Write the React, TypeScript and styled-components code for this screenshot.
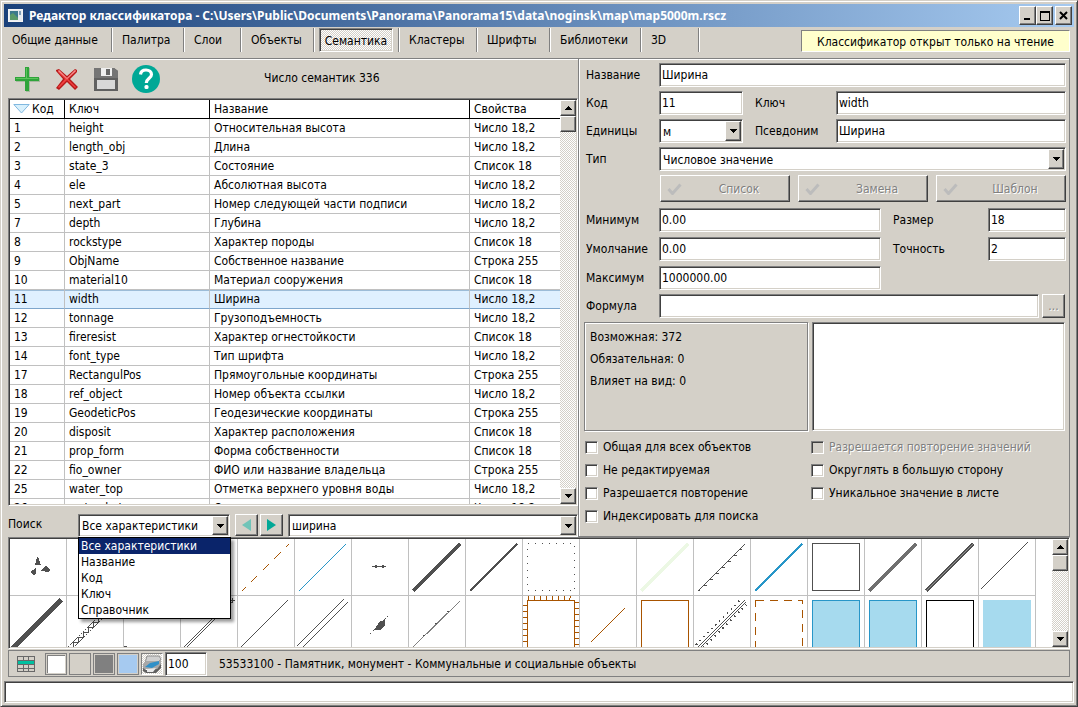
import React from "react";
import styled, { createGlobalStyle, css } from "styled-components";

const face = "#d4d0c8";
const shadow = "#808080";
const dark = "#404040";
const accent = "#00a896";
const sans = '"DejaVu Sans Condensed", "Noto Sans", sans-serif';

const sunken = css`
  border: 1px solid;
  border-color: ${shadow} #fff #fff ${shadow};
  box-shadow: inset 1px 1px ${dark}, inset -1px -1px ${face};
`;
const raised = css`
  border: 1px solid;
  border-color: #fff ${dark} ${dark} #fff;
  box-shadow: inset -1px -1px ${shadow};
  background: ${face};
`;
const dither = css`
  background: repeating-conic-gradient(#fff 0 25%, ${face} 0 50%) 0 0 / 2px 2px;
`;

const Global = createGlobalStyle`
  * { box-sizing: border-box; }
  body { margin: 0; background: ${face}; }
  body, button, input, select, table { font: 12px/16px ${sans}; color: #000; }
  button, input, select { margin: 0; padding: 0; border: 0; border-radius: 0; outline: 0; }
  svg { display: block; flex: none; }
`;

const Window = styled.div`
  display: flex;
  flex-direction: column;
  height: 100vh;
  min-height: 660px;
  min-width: 900px;
  padding: 3px;
  background: ${face};
  border: 1px solid;
  border-color: ${face} ${dark} ${dark} ${face};
  box-shadow: inset 1px 1px #fff, inset -1px -1px ${shadow};
`;
const TitleBar = styled.header`
  display: flex;
  align-items: center;
  flex: none;
  height: 23px;
  padding: 0 2px 0 4px;
  gap: 6px;
  background: linear-gradient(90deg, #1a417a, #a6caf0);
  color: #fff;
`;
const Title = styled.h1`
  flex: 1;
  margin: 0;
  font: bold 12px/16px "Noto Sans", sans-serif;
  white-space: nowrap;
`;
const CaptionButtons = styled.div`
  display: flex;
`;
const CaptionButton = styled.button`
  ${raised}
  display: grid;
  place-items: center;
  width: 17px;
  height: 19px;
  &:last-child { margin-left: 2px; }
`;

const TabBar = styled.nav`
  display: flex;
  flex: none;
  height: 31px;
  padding: 1px 4px 6px 0;
`;
const Tab = styled.button<{ $width: number }>`
  width: ${(p) => p.$width}px;
  height: 24px;
  padding-left: 10px;
  background: none;
  border-right: 1px solid ${shadow};
  box-shadow: 1px 0 #fff;
  text-align: left;
  white-space: nowrap;
  &:first-child { padding-left: 8px; }
`;
const ActiveSlot = styled.div`
  padding: 0 5px;
  border-right: 1px solid ${shadow};
  box-shadow: 1px 0 #fff;
`;
const ActiveTab = styled.button`
  ${sunken}
  ${dither}
  width: 74px;
  height: 24px;
  padding-top: 2px;
  text-align: center;
  white-space: nowrap;
`;
const Notice = styled.p`
  margin: 2px 0 0 auto;
  width: 269px;
  height: 22px;
  border: 1px solid;
  border-color: ${shadow} #fff #fff ${shadow};
  background: #ffffcc;
  line-height: 22px;
  text-align: center;
  white-space: nowrap;
`;

const Main = styled.main`
  display: grid;
  grid-template-columns: 570fr 492fr;
  flex: 1;
  min-height: 0;
  margin: 0 4px;
`;
const LeftPane = styled.section`
  display: flex;
  flex-direction: column;
  min-height: 0;
  min-width: 0;
  border-top: 1px solid ${shadow};
  box-shadow: inset 0 1px #fff;
`;
const Toolbar = styled.div`
  display: flex;
  align-items: center;
  flex: none;
  height: 39px;
  padding: 1px 0 0 7px;
`;
const ToolButton = styled.button`
  display: grid;
  place-items: center;
  width: 39px;
  height: 28px;
  padding-right: 14px;
  background: none;
`;
const Count = styled.output`
  margin: -2px 0 0 93px;
`;

const ListFrame = styled.div`
  ${sunken}
  display: flex;
  flex: 1;
  min-height: 0;
  padding: 1px;
  background: #fff;
`;
const ListView = styled.div`
  flex: 1;
  overflow: hidden;
`;
const Table = styled.table`
  width: 100%;
  table-layout: fixed;
  border-spacing: 0;
  th, td {
    height: 19px;
    padding: 0 0 0 4px;
    border-bottom: 1px solid #c0c0c0;
    border-right: 1px solid #c0c0c0;
    text-align: left;
    font-weight: normal;
    white-space: nowrap;
    overflow: hidden;
  }
  th { border-color: #000; }
  th:last-child, td:last-child { border-right: 0; }
`;
const Row = styled.tr<{ $selected: boolean }>`
  ${(p) => p.$selected && css`
    td {
      background: #dff0ff;
      border-bottom-color: #7ea6cc;
      box-shadow: inset 0 1px #9cbcd8;
    }
  `}
`;
const HeadCell = styled.th<{ $width?: number }>`
  width: ${(p) => (p.$width ? `${p.$width}px` : "auto")};
`;
const SortLabel = styled.span`
  display: flex;
  align-items: center;
  gap: 2px;
  margin-left: -1px;
`;

const ScrollTrack = styled.div`
  ${dither}
  display: flex;
  flex-direction: column;
  flex: none;
  width: 16px;
`;
const ScrollButton = styled.button`
  ${raised}
  display: grid;
  place-items: center;
  width: 16px;
  height: 16px;
  flex: none;
  &:last-child { margin-top: auto; }
`;
const Thumb = styled.div`
  ${raised}
  height: 16px;
`;

const SearchRow = styled.div`
  display: flex;
  flex: none;
  height: 31px;
  padding-top: 8px;
`;
const SearchLabel = styled.label`
  width: 70px;
  padding-top: 2px;
`;
const SelectHolder = styled.div`
  position: relative;
  width: 152px;
`;
const SearchButton = styled.button`
  ${raised}
  display: grid;
  place-items: center;
  width: 23px;
  height: 22px;
  margin-left: 5px;
  & + & { margin-left: 2px; }
`;
const GrowHolder = styled.div`
  flex: 1;
  margin-left: 5px;
`;
const Popup = styled.ul`
  position: absolute;
  z-index: 2;
  top: 23px;
  left: 0;
  width: 153px;
  margin: 0;
  padding: 0;
  border: 1px solid #000;
  background: #fff;
  box-shadow: 3px 3px 3px rgba(0, 0, 0, 0.4);
  list-style: none;
`;
const Option = styled.li<{ $selected: boolean }>`
  padding-left: 2px;
  line-height: 16px;
  white-space: nowrap;
  ${(p) => p.$selected && css`background: #0a246a; color: #fff;`}
`;

const ComboFrame = styled.div<{ $height: number }>`
  ${sunken}
  display: flex;
  height: ${(p) => p.$height}px;
  padding: 1px;
  background: #fff;
  min-width: 0;
  select, input {
    flex: 1;
    min-width: 0;
    padding: 1px 0 0 2px;
    appearance: none;
    background: transparent;
  }
`;
const DropButton = styled.button`
  ${raised}
  display: grid;
  place-items: center;
  width: 16px;
  flex: none;
`;
const TextBox = styled.input`
  ${sunken}
  height: 24px;
  padding: 0 2px;
  background: #fff;
  min-width: 0;
  width: 100%;
`;

const RightPane = styled.section`
  display: flex;
  flex-direction: column;
  gap: 4px;
  min-width: 0;
  padding: 4px 3px 0 7px;
  border: 1px solid ${shadow};
  box-shadow: inset 1px 1px #fff, 0 1px #fff;
`;
const FormRow = styled.div<{ $cols: string }>`
  display: grid;
  grid-template-columns: 73px ${(p) => p.$cols};
  align-items: center;
`;
const SideLabel = styled.label`
  padding-left: 12px;
`;
const PushRow = styled.div`
  display: grid;
  grid-template-columns: repeat(3, 1fr);
  gap: 8px;
  margin: 0 0 2px 74px;
`;
const PushButton = styled.button`
  ${raised}
  display: grid;
  grid-template-columns: 32px 1fr 10px;
  align-items: center;
  height: 27px;
  padding-left: 6px;
  color: ${shadow};
  text-shadow: 1px 1px #fff;
`;
const RangeRows = styled.div`
  display: grid;
  gap: 5px;
`;
const MoreButton = styled.button`
  ${raised}
  width: 23px;
  height: 24px;
  margin-left: 3px;
  color: ${shadow};
  text-shadow: 1px 1px #fff;
`;
const InfoRow = styled.div`
  display: grid;
  grid-template-columns: 224px 1fr;
  gap: 4px;
  height: 109px;
  margin: 0 1px 0 -2px;
`;
const InfoBox = styled.div`
  padding: 3px 5px;
  border: 1px solid ${shadow};
  box-shadow: inset 1px 1px #fff, 1px 1px #fff;
  line-height: 22px;
  p { margin: 0; }
`;
const NoteArea = styled.textarea`
  ${sunken}
  display: block;
  width: 100%;
  resize: none;
  background: #fff;
`;
const Checks = styled.div`
  display: grid;
  grid-template-columns: 226px 1fr;
  row-gap: 7px;
  padding-top: 4px;
`;
const CheckLabel = styled.label<{ $off?: boolean }>`
  display: flex;
  align-items: center;
  gap: 5px;
  margin-left: -1px;
  white-space: nowrap;
  ${(p) => p.$off && css`color: ${shadow}; text-shadow: 1px 1px #fff;`}
`;
const CheckBox = styled.input`
  ${sunken}
  appearance: none;
  width: 13px;
  height: 13px;
  background: #fff;
  &:disabled { background: ${face}; }
`;

const SymbolFrame = styled.section`
  ${sunken}
  display: flex;
  flex: none;
  height: 112px;
  margin: 0 4px;
  padding: 1px;
  background: #fff;
`;
const SymbolGrid = styled.div`
  display: grid;
  grid-template-columns: repeat(auto-fill, 57px);
  grid-auto-rows: 57px;
  flex: 1;
  overflow: hidden;
`;
const SymbolCell = styled.div`
  border-right: 1px solid #c0c0c0;
  border-bottom: 1px solid #c0c0c0;
`;

const StatusBar = styled.footer`
  display: flex;
  align-items: center;
  flex: none;
  gap: 2px;
  height: 27px;
  margin: 1px 4px 4px;
  padding: 0 8px;
  border: 1px solid ${shadow};
`;
const GridButton = styled.button`
  width: 26px;
  background: none;
`;
const Swatch = styled.button<{ $color: string; $active?: boolean }>`
  width: 22px;
  height: 22px;
  border: 1px solid ${shadow};
  background: ${(p) => p.$color};
  box-shadow: inset 0 0 0 1px ${face};
  ${(p) => p.$active && css`box-shadow: inset 0 0 0 1px ${face}, inset 2px 2px ${shadow};`}
`;
const PrintButton = styled.button`
  ${dither}
  display: grid;
  place-items: center;
  width: 22px;
  height: 22px;
  border: 1px solid;
  border-color: ${shadow} #fff #fff ${shadow};
`;
const ScaleBox = styled.div`
  width: 42px;
`;
const StatusText = styled.span`
  margin-left: 10px;
`;
const CommandLine = styled.input`
  ${sunken}
  flex: none;
  height: 22px;
  width: 100%;
  background: #fff;
`;

const Arrow = ({ up }: { up?: boolean }) => (
  <svg width="7" height="4" viewBox="0 0 7 4" shapeRendering="crispEdges" aria-hidden="true">
    <path d={up ? "M3.5 0L7 4H0z" : "M0 0h7L3.5 4z"} />
  </svg>
);

const Scrollbar = () => (
  <ScrollTrack>
    <ScrollButton aria-label="Вверх"><Arrow up /></ScrollButton>
    <Thumb />
    <ScrollButton aria-label="Вниз"><Arrow /></ScrollButton>
  </ScrollTrack>
);

const Combo = ({ id, value, height = 24, options }: { id: string; value: string; height?: number; options?: string[] }) => (
  <ComboFrame $height={height}>
    <select id={id} defaultValue={value}>
      {(options ?? [value]).map((o) => <option key={o}>{o}</option>)}
    </select>
    <DropButton tabIndex={-1} aria-hidden="true"><Arrow /></DropButton>
  </ComboFrame>
);

const AppIcon = () => (
  <svg width="15" height="13" viewBox="0 0 15 13" aria-hidden="true">
    <rect x=".5" y=".5" width="14" height="12" fill="#e8ecf0" stroke="#f4f4f4" />
    <rect x="2" y="2" width="8" height="9" fill="#3c7a8c" />
    <path d="M2 11V6l3-2 5 5v2z" fill="#5a9a6a" />
    <rect x="11" y="2" width="2" height="4" fill="#80a0b8" />
  </svg>
);
const PlusIcon = () => (
  <svg width="25" height="25" viewBox="0 0 25 25" aria-hidden="true">
    <path d="M11 1h4v10h10v4H15v10h-4V15H1v-4h10z" fill="#88a884" opacity=".6" />
    <path d="M10 0h4v10h10v4H14v10h-4V14H0v-4h10z" fill="#2fa43a" />
    <path d="M11 1h1v10h11v1H1v-1h10z" fill="#5cc45c" />
  </svg>
);
const CrossIcon = () => (
  <svg width="24" height="23" viewBox="0 0 24 23" aria-hidden="true">
    <path d="M4 1l8 7 8-7 2 1v2l-7 7 8 8-3 3-8-8-8 8-3-2 7-9-7-8V2z" fill="#b81818" />
    <path d="M4 2l8 8 8-8 1 1-8 8 8 8-1 1-8-8-8 8-1-1 7-8-7-7z" fill="#f04040" />
    <path d="M4 2l8 8 8-8 1 1-9 8-9-8z" fill="#f49090" />
  </svg>
);
const DiskIcon = () => (
  <svg width="24" height="24" viewBox="0 0 24 24" aria-hidden="true">
    <path d="M0 1h20l4 3v20H0z" fill="#606060" />
    <path d="M0 1h20l4 3v7H0z" fill="#757575" />
    <rect x="7" y="1" width="11" height="8" fill="#f0f0f0" />
    <rect x="12" y="2" width="4" height="6" fill="#686868" />
    <rect x="3" y="13" width="18" height="9" fill="#d8d8d8" />
  </svg>
);
const HelpIcon = () => (
  <svg width="28" height="28" viewBox="0 0 28 28" aria-hidden="true">
    <circle cx="14" cy="14" r="14" fill={accent} />
    <path d="M8.500 9.500c.3-3 2.700-4.500 5.500-4.500 3.200 0 5.500 1.700 5.500 4.500 0 3.700-5.200 4-5.200 8.500" fill="none" stroke="#fff" strokeWidth="3.200" />
    <rect x="12.500" y="20" width="4" height="4" rx="1.500" fill="#fff" />
  </svg>
);
const SortIcon = () => (
  <svg width="17" height="10" viewBox="0 0 17 10" aria-hidden="true">
    <path d="M.8.500h15.400L8.500 9z" fill="#d8f0fc" stroke="#80b8e0" />
  </svg>
);
const CheckIcon = () => (
  <svg width="15" height="12" viewBox="0 0 15 12" aria-hidden="true">
    <path d="M1.500 6l4 4.500L13.500 1.500" fill="none" stroke="#bcbcbc" strokeWidth="3" />
  </svg>
);
const TableIcon = () => (
  <svg width="18" height="16" viewBox="0 0 18 16" shapeRendering="crispEdges" aria-hidden="true">
    <path d="M0 4h18v4H0z" fill="#00c0a0" />
    <path d="M.5.5h17v15H.5zM0 4.500h18M0 8.500h18M0 12.500h18M6.500 0v4M11.500 0v4M6.500 8v8M11.500 8v8" fill="none" stroke="#686868" />
    <path d="M1 5h16v3H1z" fill="#00c0a0" />
  </svg>
);
const PrinterIcon = () => (
  <svg width="20" height="20" viewBox="0 0 20 20" aria-hidden="true">
    <path d="M5 2h12l2 3-4 4H3z" fill="#d0d0d0" stroke="#909090" />
    <path d="M1 10l3-3h13l2-2v6l-4 4H1z" fill="#a8a8a8" />
    <path d="M1 14l3 2 11-1 4-5v4l-5 5H4l-3-2z" fill="#606060" />
    <path d="M3 13l5-4 9-2v3l-7 4z" fill="#3090c8" />
    <path d="M5 15l9-1-3 4H5z" fill="#eaeaea" />
  </svg>
);

const ink = "#505050";
const brown = "#a85400";
const blue = "#2896c8";
const pale = "#a6daee";

const Diagonal = ({ color = ink, width = 1, dash }: { color?: string; width?: number; dash?: string }) => (
  <path d="M4 52L51 5" stroke={color} strokeWidth={width} strokeDasharray={dash} strokeDashoffset={dash ? 4 : 0} />
);
const Square = ({ color = "none", fill = "none", dash }: { color?: string; fill?: string; dash?: string }) => (
  <rect x="4.500" y="4.500" width="47" height="47" stroke={color} fill={fill} strokeDasharray={dash} />
);

const symbols: React.ReactNode[] = [
  <path d="M27 18h1l3 8h-6zM26 29v5l-2 3-4-4zM31 32l5-6 4 5-1 2z" fill={ink} />,
  null,
  null,
  null,
  <Diagonal color={brown} dash="9 7.500" />,
  <Diagonal color={blue} />,
  <><path d="M20 27.500h14" stroke={ink} /><path d="M23 26h2v3h-2zM30 26h2v3h-2z" fill={ink} /></>,
  <Diagonal width={3} />,
  <Diagonal width={2} />,
  <rect x="4.500" y="4.500" width="47" height="47" stroke={ink} strokeDasharray="1 6" />,
  null,
  <Diagonal color="#ecf8e4" width={3} />,
  <><Diagonal /><path d="M4 51h2M10 46h3M16 40h3M22 34h3M28 28h3M34 22h3M40 16h3M45 10h3" stroke={ink} /></>,
  <Diagonal color={blue} width={2} />,
  <Square color={ink} />,
  <Diagonal color="#707070" width={3} />,
  <><Diagonal width={3} /><Diagonal color="#909090" /></>,
  <path d="M2 50L49 3" stroke={ink} />,
  <path d="M3 52L51 4" stroke={ink} strokeWidth="5" />,
  <><path d="M1 51L48 4M6 52L52 6" stroke={ink} strokeDasharray="2 1" /><path d="M6 51v-5h5v-5h5v-5h5v-5h5v-5h5v-5h5v-5h5" stroke={ink} /></>,
  <path d="M0 50.500h3" stroke={ink} />,
  <path d="M3 51L50 4M5 52L52 5M49 4.500h5M51.500 2v5" stroke={ink} />,
  <path d="M3 51L50 4" stroke={ink} />,
  <path d="M2 50L49 3M7 52L53 6" stroke={ink} />,
  <><path d="M18 38L37 19" stroke={ink} strokeDasharray="2 2" /><path d="M22 34l6-9 5-1v5l-4 5z" fill={ink} /></>,
  <><path d="M3 52L51 5" stroke="#808080" /><path d="M14 39.500h2M26 27.500h2M38 15.500h2" stroke={ink} /></>,
  null,
  <><Square color={brown} /><path d="M5.500 0v4m6-4v4m6-4v4m6-4v4m6-4v4m6-4v4m6-4v4m5 0l1-4M0 9.500h4m-4 6h4m-4 6h4m-4 6h4m-4 6h4m-4 6h4m-4 6h4M52 6.500h4m-4 6h4m-4 6h4m-4 6h4m-4 6h4m-4 6h4m-4 6h4m-4 6h4" stroke={brown} /></>,
  <path d="M11 46L45 12" stroke={brown} />,
  <Square color={brown} />,
  <><path d="M4 51L51 4M6 52L52 6" stroke={ink} /><path d="M2 49L47 3M9 52L52 9" stroke={ink} strokeDasharray="1.500 4" strokeWidth="1.500" /></>,
  <Square color={brown} dash="8 6" />,
  <Square color={blue} fill={pale} />,
  <Square color={blue} fill={pale} />,
  <Square color="#000" />,
  <rect x="4" y="4" width="48" height="48" fill={pale} />,
];

const rows: string[][] = [
  ["1", "height", "Относительная высота", "Число 18,2"],
  ["2", "length_obj", "Длина", "Число 18,2"],
  ["3", "state_3", "Состояние", "Список 18"],
  ["4", "ele", "Абсолютная высота", "Число 18,2"],
  ["5", "next_part", "Номер следующей части подписи", "Число 18,2"],
  ["7", "depth", "Глубина", "Число 18,2"],
  ["8", "rockstype", "Характер породы", "Список 18"],
  ["9", "ObjName", "Собственное название", "Строка 255"],
  ["10", "material10", "Материал сооружения", "Список 18"],
  ["11", "width", "Ширина", "Число 18,2"],
  ["12", "tonnage", "Грузоподъемность", "Число 18,2"],
  ["13", "fireresist", "Характер огнестойкости", "Список 18"],
  ["14", "font_type", "Тип шрифта", "Число 18,2"],
  ["17", "RectangulPos", "Прямоугольные координаты", "Строка 255"],
  ["18", "ref_object", "Номер объекта ссылки", "Число 18,2"],
  ["19", "GeodeticPos", "Геодезические координаты", "Строка 255"],
  ["20", "disposit", "Характер расположения", "Список 18"],
  ["21", "prop_form", "Форма собственности", "Список 18"],
  ["22", "fio_owner", "ФИО или название владельца", "Строка 255"],
  ["25", "water_top", "Отметка верхнего уровня воды", "Число 18,2"],
  ["26", "water_bot", "Отметка нижнего уровня воды", "Число 18,2"],
];

const searchModes = ["Все характеристики", "Название", "Код", "Ключ", "Справочник"];

export default function App() {
  return (
    <Window>
      <Global />
      <TitleBar>
        <AppIcon />
        <Title>Редактор классификатора - C:\Users\Public\Documents\Panorama\Panorama15\data\noginsk\map\map5000m.rscz</Title>
        <CaptionButtons>
          <CaptionButton aria-label="Свернуть">
            <svg width="9" height="9"><path d="M1 7h6v2H1z" /></svg>
          </CaptionButton>
          <CaptionButton aria-label="Развернуть">
            <svg width="10" height="10" shapeRendering="crispEdges"><path d="M0 0h10v10H0zM1 2v7h8V2z" fillRule="evenodd" /></svg>
          </CaptionButton>
          <CaptionButton aria-label="Закрыть">
            <svg width="9" height="9"><path d="M1 1l7 7M8 1L1 8" stroke="#000" strokeWidth="2" /></svg>
          </CaptionButton>
        </CaptionButtons>
      </TitleBar>

      <TabBar>
        <Tab $width={108}>Общие данные</Tab>
        <Tab $width={72}>Палитра</Tab>
        <Tab $width={57}>Слои</Tab>
        <Tab $width={73}>Объекты</Tab>
        <ActiveSlot><ActiveTab aria-current="page">Семантика</ActiveTab></ActiveSlot>
        <Tab $width={78}>Кластеры</Tab>
        <Tab $width={73}>Шрифты</Tab>
        <Tab $width={91}>Библиотеки</Tab>
        <Tab $width={58}>3D</Tab>
        <Notice>Классификатор открыт только на чтение</Notice>
      </TabBar>

      <Main>
        <LeftPane>
          <Toolbar>
            <ToolButton aria-label="Добавить"><PlusIcon /></ToolButton>
            <ToolButton aria-label="Удалить"><CrossIcon /></ToolButton>
            <ToolButton aria-label="Сохранить"><DiskIcon /></ToolButton>
            <ToolButton aria-label="Справка"><HelpIcon /></ToolButton>
            <Count>Число семантик 336</Count>
          </Toolbar>
          <ListFrame>
            <ListView>
              <Table>
                <thead>
                  <tr>
                    <HeadCell $width={55}><SortLabel><SortIcon />Код</SortLabel></HeadCell>
                    <HeadCell $width={145}>Ключ</HeadCell>
                    <HeadCell>Название</HeadCell>
                    <HeadCell $width={90}>Свойства</HeadCell>
                  </tr>
                </thead>
                <tbody>
                  {rows.map((r) => (
                    <Row key={r[0]} $selected={r[0] === "11"}>
                      {r.map((text, i) => <td key={i}>{text}</td>)}
                    </Row>
                  ))}
                </tbody>
              </Table>
            </ListView>
            <Scrollbar />
          </ListFrame>
          <SearchRow>
            <SearchLabel htmlFor="mode">Поиск</SearchLabel>
            <SelectHolder>
              <Combo id="mode" value={searchModes[0]} height={23} options={searchModes} />
              <Popup role="listbox" aria-label="Поиск">
                {searchModes.map((m, i) => (
                  <Option key={m} role="option" aria-selected={i === 0} $selected={i === 0}>{m}</Option>
                ))}
              </Popup>
            </SelectHolder>
            <SearchButton aria-label="Назад">
              <svg width="9" height="12"><path d="M9 0v12L0 6z" fill="#70c4b8" /></svg>
            </SearchButton>
            <SearchButton aria-label="Вперёд">
              <svg width="9" height="12"><path d="M0 0v12l9-6z" fill={accent} /></svg>
            </SearchButton>
            <GrowHolder>
              <ComboFrame $height={23}>
                <input aria-label="Строка поиска" defaultValue="ширина" />
                <DropButton aria-label="История"><Arrow /></DropButton>
              </ComboFrame>
            </GrowHolder>
          </SearchRow>
        </LeftPane>

        <RightPane>
          <FormRow $cols="1fr">
            <label htmlFor="name">Название</label>
            <TextBox id="name" defaultValue="Ширина" />
          </FormRow>
          <FormRow $cols="84px 93px 1fr">
            <label htmlFor="code">Код</label>
            <TextBox id="code" defaultValue="11" />
            <SideLabel htmlFor="key">Ключ</SideLabel>
            <TextBox id="key" defaultValue="width" />
          </FormRow>
          <FormRow $cols="84px 93px 1fr">
            <label htmlFor="units">Единицы</label>
            <Combo id="units" value="м" />
            <SideLabel htmlFor="alias">Псевдоним</SideLabel>
            <TextBox id="alias" defaultValue="Ширина" />
          </FormRow>
          <FormRow $cols="1fr">
            <label htmlFor="type">Тип</label>
            <Combo id="type" value="Числовое значение" />
          </FormRow>
          <PushRow>
            <PushButton disabled><CheckIcon />Список</PushButton>
            <PushButton disabled><CheckIcon />Замена</PushButton>
            <PushButton disabled><CheckIcon />Шаблон</PushButton>
          </PushRow>
          <RangeRows>
            <FormRow $cols="1fr 107px 78px">
              <label htmlFor="min">Минимум</label>
              <TextBox id="min" defaultValue="0.00" />
              <SideLabel htmlFor="size">Размер</SideLabel>
              <TextBox id="size" defaultValue="18" />
            </FormRow>
            <FormRow $cols="1fr 107px 78px">
              <label htmlFor="def">Умолчание</label>
              <TextBox id="def" defaultValue="0.00" />
              <SideLabel htmlFor="prec">Точность</SideLabel>
              <TextBox id="prec" defaultValue="2" />
            </FormRow>
            <FormRow $cols="1fr 185px">
              <label htmlFor="max">Максимум</label>
              <TextBox id="max" defaultValue="1000000.00" />
            </FormRow>
          </RangeRows>
          <FormRow $cols="1fr 27px">
            <label htmlFor="formula">Формула</label>
            <TextBox id="formula" defaultValue="" />
            <MoreButton disabled aria-label="Изменить формулу">...</MoreButton>
          </FormRow>
          <InfoRow>
            <InfoBox>
              <p>Возможная: 372</p>
              <p>Обязательная: 0</p>
              <p>Влияет на вид: 0</p>
            </InfoBox>
            <NoteArea aria-label="Примечание" />
          </InfoRow>
          <Checks>
            <CheckLabel><CheckBox type="checkbox" />Общая для всех объектов</CheckLabel>
            <CheckLabel $off><CheckBox type="checkbox" disabled />Разрешается повторение значений</CheckLabel>
            <CheckLabel><CheckBox type="checkbox" />Не редактируемая</CheckLabel>
            <CheckLabel><CheckBox type="checkbox" />Округлять в большую сторону</CheckLabel>
            <CheckLabel><CheckBox type="checkbox" />Разрешается повторение</CheckLabel>
            <CheckLabel><CheckBox type="checkbox" />Уникальное значение в листе</CheckLabel>
            <CheckLabel><CheckBox type="checkbox" />Индексировать для поиска</CheckLabel>
          </Checks>
        </RightPane>
      </Main>

      <SymbolFrame>
        <SymbolGrid>
          {symbols.map((drawing, i) => (
            <SymbolCell key={i}>
              <svg width="56" height="56" viewBox="0 0 56 56" fill="none" shapeRendering="crispEdges" aria-hidden="true">{drawing}</svg>
            </SymbolCell>
          ))}
        </SymbolGrid>
        <Scrollbar />
      </SymbolFrame>

      <StatusBar>
        <GridButton aria-label="Таблица"><TableIcon /></GridButton>
        <Swatch $color="#fff" $active aria-label="Белый фон" />
        <Swatch $color={face} aria-label="Серый фон" />
        <Swatch $color="#808080" aria-label="Тёмный фон" />
        <Swatch $color="#a6caf0" aria-label="Голубой фон" />
        <PrintButton aria-label="Вид печати"><PrinterIcon /></PrintButton>
        <ScaleBox><TextBox aria-label="Масштаб" defaultValue="100" /></ScaleBox>
        <StatusText>53533100 - Памятник, монумент - Коммунальные и социальные объекты</StatusText>
      </StatusBar>
      <CommandLine aria-label="Сообщение" />
    </Window>
  );
}
